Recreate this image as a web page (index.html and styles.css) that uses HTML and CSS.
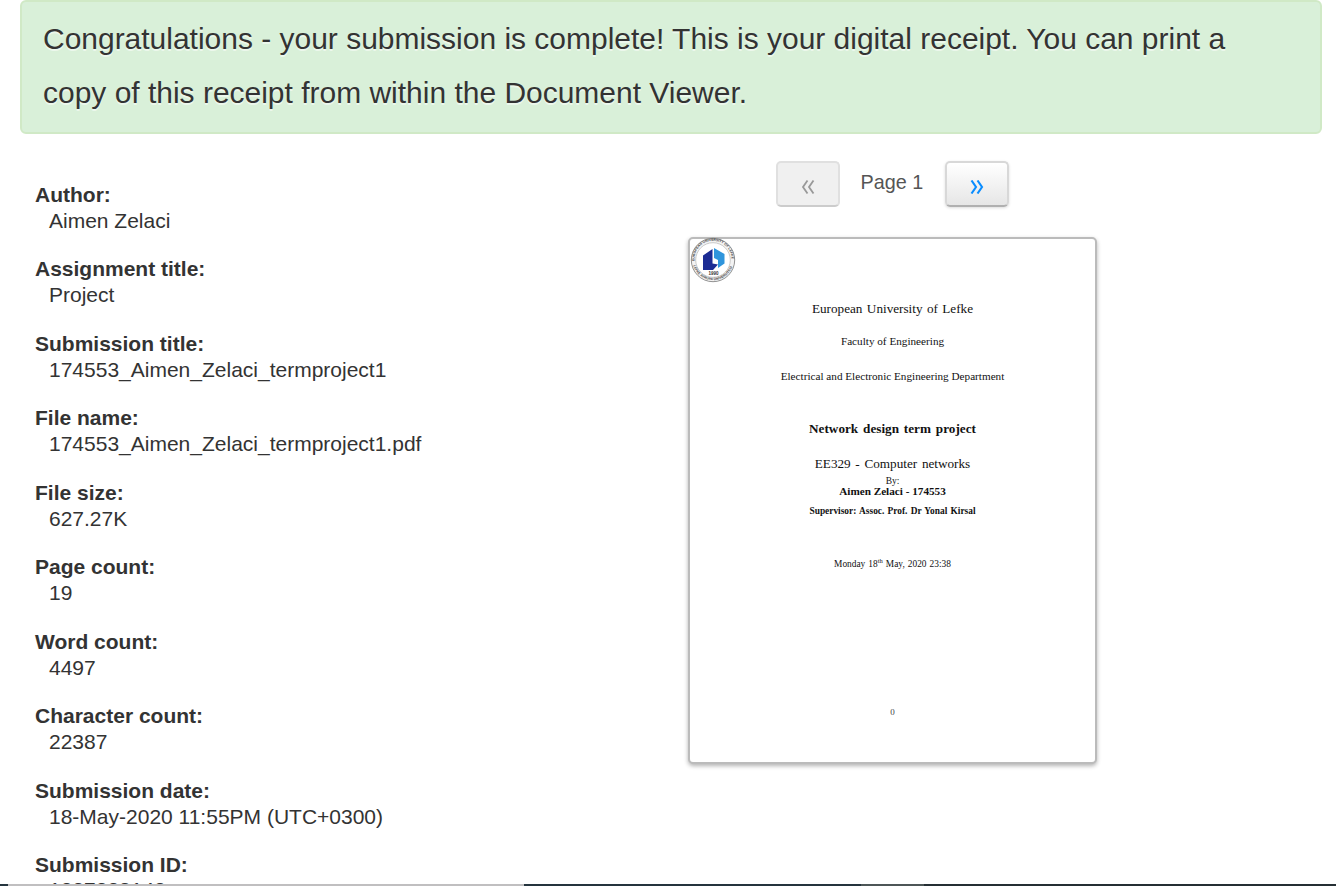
FILE: index.html
```
<!DOCTYPE html>
<html lang="en">
<head>
<meta charset="utf-8">
<title>Digital receipt</title>
<link rel="stylesheet" href="styles.css">
</head>
<body>
<div class="screen">
<div class="alert">Congratulations - your submission is complete! This is your digital receipt. You can print a copy of this receipt from within the Document Viewer.</div>
<main class="columns">
<dl class="details">
<dt>Author:</dt><dd>Aimen Zelaci</dd>
<dt>Assignment title:</dt><dd>Project</dd>
<dt>Submission title:</dt><dd>174553_Aimen_Zelaci_termproject1</dd>
<dt>File name:</dt><dd>174553_Aimen_Zelaci_termproject1.pdf</dd>
<dt>File size:</dt><dd>627.27K</dd>
<dt>Page count:</dt><dd>19</dd>
<dt>Word count:</dt><dd>4497</dd>
<dt>Character count:</dt><dd>22387</dd>
<dt>Submission date:</dt><dd>18-May-2020 11:55PM (UTC+0300)</dd>
<dt>Submission ID:</dt><dd class="last">1327338142</dd>
</dl>
<section class="preview">
<nav class="pager">
<button class="btn disabled" disabled aria-label="Previous page"><svg class="chevrons" viewBox="0 0 14 14" width="14" height="14"><path d="M6.500 .500L2 7l4.500 6.500M12.500 .500L8 7l4.500 6.500"/></svg></button>
<span class="page-label">Page 1</span>
<button class="btn next" aria-label="Next page"><svg class="chevrons" viewBox="0 0 14 14" width="14" height="14"><path d="M1.500 .500L6 7l-4.500 6.500M7.500 .500L12 7l-4.500 6.500"/></svg></button>
</nav>
<article class="paper">
<svg class="seal" viewBox="0 0 46 46" width="46" height="46">
<defs><path id="ring-top" d="M4.700 25a18.500 18.500 0 1 1 36.600 0"/><path id="ring-bottom" d="M3 27.500a20.600 20.600 0 0 0 40 0"/></defs>
<circle cx="23" cy="23" r="21.700" fill="#f3f3f3" stroke="#777" stroke-width=".8"/>
<circle cx="23" cy="23" r="17.300" fill="#fff" stroke="#aaa" stroke-width=".6"/>
<text class="seal-ring"><textPath href="#ring-top" startOffset="1" textLength="59">EUROPEAN UNIVERSITY OF LEFKE</textPath></text>
<text class="seal-ring"><textPath href="#ring-bottom" startOffset="1" textLength="51">LEFKE AVRUPA ÜNİVERSİTESİ</textPath></text>
<path d="M13 18.500l9.500-6.500v14.500l5.500 1-5 5.500h-10z" fill="#1c2c94"/>
<path d="M24 11l10.500 6v9.500l-6.500 4.500v-8l-4-2z" fill="#2f95dc"/>
<text class="seal-year" x="23.500" y="37.500">1990</text>
</svg>
<p class="university">European University of Lefke</p>
<p class="faculty">Faculty of Engineering</p>
<p class="department">Electrical and Electronic Engineering Department</p>
<h1>Network design term project</h1>
<p class="course">EE329 - Computer networks</p>
<p class="by">By:</p>
<p class="author">Aimen Zelaci - 174553</p>
<p class="supervisor">Supervisor: Assoc. Prof. Dr Yonal Kirsal</p>
<p class="date">Monday 18<sup>th</sup> May, 2020 23:38</p>
<p class="folio">0</p>
</article>
</section>
</main>
<div class="taskbar"></div>
</div>
</body>
</html>
```
FILE: styles.css
```
* { box-sizing: border-box; }
body { margin: 0; background: #fff; color: #333; font: 21px/26px "Liberation Sans", Arial, sans-serif; }
.screen { height: 886px; overflow: hidden; position: relative; }
.alert { height: 134px; margin: 0 14px 0 20px; padding: 10px 40px 10px 21px; border: 2px solid #d0e9c6; border-radius: 6px; background: #d9f0d9; font-size: 29.98px; line-height: 54px; text-shadow: 0 2px 0 rgba(255,255,255,.5); }
.columns { display: grid; grid-template-columns: 688px 409px; }
.details { margin: 48px 0 0 35px; }
.details dt { font-weight: bold; }
.details dd { margin: 0 0 22.45px 14px; }
.details .last { margin-top: -0.5px; }
.preview { padding-top: 27px; }
.pager { display: flex; justify-content: center; gap: 21.5px; height: 46px; }
.btn { display: flex; align-items: center; justify-content: center; width: 64px; height: 46px; padding: 5px 0 0; border: 2px solid #e0e0e0; border-bottom-color: #ccc; border-radius: 5px; }
.chevrons { fill: none; stroke: currentColor; stroke-width: 1.8; }
.disabled { background: #f0f0f0; color: #999; }
.next { color: #0a8dff; background: linear-gradient(#fff, #e6e6e6); border-color: #d8d8d8 #d8d8d8 #b0b0b0; box-shadow: 0 1px 3px rgba(0,0,0,.14); }
.next .chevrons { stroke-width: 2.1; }
.page-label { color: #555; padding-top: 8px; width: 62px; white-space: nowrap; font-size: 19.8px; text-indent: -1px; }
.paper { position: relative; width: 409px; height: 527px; margin-top: 30px; padding-top: 62px; border: 2px solid #bbb; border-radius: 5px; box-shadow: 0 2px 4px rgba(0,0,0,.3); background: #fff; color: #111; text-align: center; font-family: "Liberation Serif", "Times New Roman", serif; white-space: nowrap; }
.paper p, .paper h1 { margin: 0; line-height: 16px; }
.seal { position: absolute; left: 0; top: -2px; }
.seal-ring { font: bold 3.4px "Liberation Sans", Arial, sans-serif; fill: #444; }
.seal-year { font: bold 4.5px "Liberation Sans", Arial, sans-serif; fill: #333; text-anchor: middle; }
.paper .university { font-size: 13.2px; word-spacing: 1.1px; }
.paper .faculty { font-size: 11.2px; margin-top: 16px; }
.paper .department { font-size: 11.2px; margin-top: 19px; }
.paper h1 { font-size: 13.2px; margin-top: 37px; word-spacing: 1.6px; }
.paper .course { font-size: 13.2px; margin-top: 19px; word-spacing: 1.4px; }
.paper .by { font-size: 9.5px; line-height: 10px; margin-top: 4px; }
.paper .author { font-size: 11.2px; font-weight: bold; line-height: 12px; margin-top: -1px; }
.paper .supervisor { font-size: 9.4px; font-weight: bold; line-height: 12px; margin-top: 8px; word-spacing: .9px; }
.paper .date { font-size: 9.4px; line-height: 12px; margin-top: 41px; word-spacing: .7px; }
.date sup { font-size: 6.5px; line-height: 0; vertical-align: 4px; }
.paper .folio { font-size: 9px; margin-top: 134px; color: #444; }
.taskbar { position: absolute; left: 0; right: 0; bottom: 0; height: 2px; background: linear-gradient(90deg, #25353f 0 8px, #c0bfc0 8px 524px, #25343e 524px 861px, #4d5657 861px 924px, #252f34 924px); }
```
